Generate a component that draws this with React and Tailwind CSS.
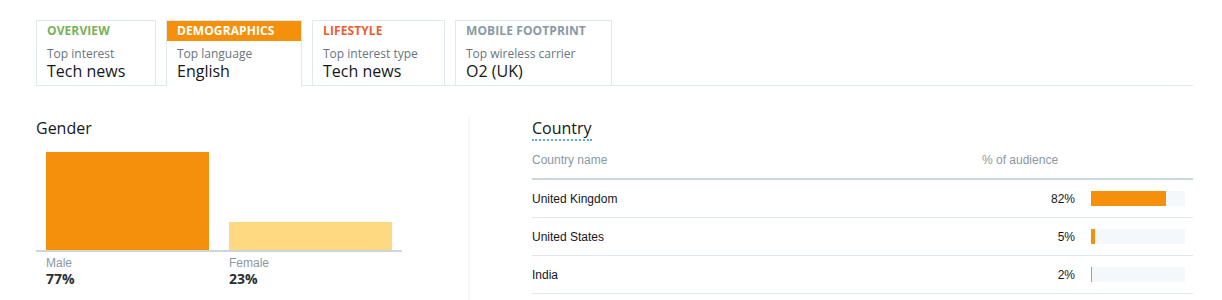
import React from "react";

const tabs = [
  { key: "OVERVIEW", color: "text-[#77b255]", label: "Top interest", value: "Tech news", w: "w-[120px]" },
  { key: "DEMOGRAPHICS", active: true, label: "Top language", value: "English", w: "w-[136px]" },
  { key: "LIFESTYLE", color: "text-[#ef5b32]", label: "Top interest type", value: "Tech news", w: "w-[133px]" },
  { key: "MOBILE FOOTPRINT", color: "text-[#8899a6]", label: "Top wireless carrier", value: "O2 (UK)", w: "w-[157px]" },
];

const countries = [
  { name: "United Kingdom", pct: "82%", fill: 75 },
  { name: "United States", pct: "5%", fill: 4 },
  { name: "India", pct: "2%", fill: 1 },
];

const gotham = { fontFamily: '"Open Sans", "Liberation Sans", sans-serif' };
const helv = { fontFamily: '"Liberation Sans", Arial, sans-serif' };

export default function App() {
  return (
    <div className="w-[1222px] h-[300px] overflow-hidden bg-white pl-[36px] pr-[29px] pt-[20px] text-[#292f33]" style={gotham}>
      <div className="flex gap-[10px] border-b border-[#e1e8ed] h-[66px]">
        {tabs.map((t) => (
          <div
            key={t.key}
            className={`${t.w} border-x border-t border-[#e1e8ed] bg-white flex flex-col ${t.active ? "h-[66px] relative z-10" : "h-[65px]"}`}
          >
            <div
              className={`h-[20px] px-[10px] flex items-center text-[12px] font-bold leading-none tracking-[0.1px] ${t.active ? "bg-[#f4900c] text-white" : t.color}`}
            >
              {t.key}
            </div>
            <div className="px-[10px] mt-[5px] text-[12px] leading-[15px] text-[#66757f]">{t.label}</div>
            <div className="px-[10px] text-[16px] leading-[20px] text-[#14171a]">{t.value}</div>
          </div>
        ))}
      </div>

      <div className="flex mt-[30px] h-[200px]">
        <div className="w-[366px] flex flex-col">
          <div className="mt-[2px] text-[16px] leading-[20px] text-[#14171a]">Gender</div>
          <div className="mt-[14px] h-[100px] flex items-end gap-[20px] px-[10px] border-b-2 border-[#ccd6dd]">
            <div className="w-[163px] h-[98px] bg-[#f4900c]" />
            <div className="w-[163px] h-[28px] bg-[#ffd882]" />
          </div>
          <div className="flex gap-[20px] px-[10px] mt-[4px]">
            <div className="w-[163px]">
              <div className="text-[12px] leading-[14px] text-[#8899a6]" style={helv}>Male</div>
              <div className="mt-[1px] text-[14px] leading-[16px] font-bold text-[#292f33]">77%</div>
            </div>
            <div className="w-[163px]">
              <div className="text-[12px] leading-[14px] text-[#8899a6]" style={helv}>Female</div>
              <div className="mt-[1px] text-[14px] leading-[16px] font-bold text-[#292f33]">23%</div>
            </div>
          </div>
        </div>

        <div className="ml-[66px] w-[2px] bg-[#f5f8fa] h-[200px]" />

        <div className="ml-[62px] flex-1 flex flex-col">
          <div className="mt-[3px] flex">
            <span className="block text-[16px] leading-[18px] pb-[2px] text-[#14171a] border-b-2 border-dotted border-[#55acee]">
              Country
            </span>
          </div>
          <div className="h-[39px] flex items-center text-[12px] text-[#8899a6] border-b-2 border-[#ccd6dd]" style={helv}>
            <div className="flex-1">Country name</div>
            <div className="w-[211px]">% of audience</div>
          </div>
          {countries.map((c) => (
            <div key={c.name} className="h-[38px] flex items-center border-b border-[#e1e8ed] text-[12px] text-[#14171a]" style={helv}>
              <div className="flex-1">{c.name}</div>
              <div className="w-[93px] text-right">{c.pct}</div>
              <div className="ml-[16px] w-[94px] h-[15px] bg-[#f5f8fa] flex">
                <div className="h-full bg-[#f4900c]" style={{ width: c.fill }} />
              </div>
              <div className="w-[8px]" />
            </div>
          ))}
        </div>
      </div>
    </div>
  );
}
